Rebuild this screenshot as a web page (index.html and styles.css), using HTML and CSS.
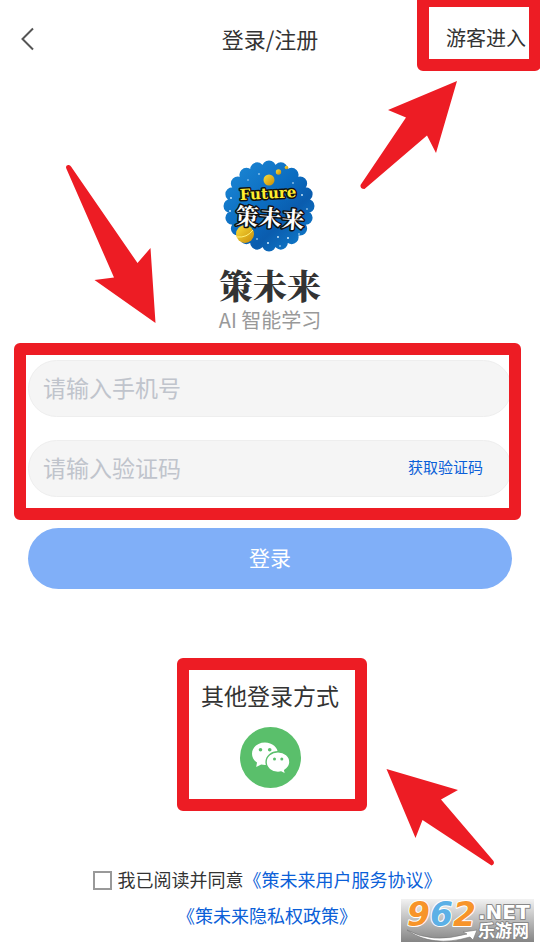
FILE: index.html
```html
<!DOCTYPE html>
<html lang="zh-CN">
<head>
<meta charset="utf-8">
<meta name="viewport" content="width=device-width, initial-scale=1">
<title>登录/注册</title>
<link rel="stylesheet" href="styles.css">
</head>
<body>

<header class="header">
	<button class="back" type="button" aria-label="返回">
		<svg width="16" height="26" viewBox="0 0 16 26"><path d="M13 2.500 2.500 13 13 23.500"/></svg>
	</button>
	<h1 class="header-title">登录/注册</h1>
	<div class="guest">
		<a class="guest-link" href="#">游客进入</a>
		<span class="frame frame-guest"></span>
		<svg class="arrow arrow-guest" width="98" height="111" viewBox="0 0 98 111">
			<path d="M97 1 28 30 46 37.500 0.500 105Q0 109 4.500 109L67 55.500 76 73Z"/>
		</svg>
	</div>
</header>

<main class="main">
	<section class="brand">
		<svg class="logo" width="92" height="92" viewBox="0 0 92 92">
			<defs>
				<linearGradient id="sea" gradientUnits="userSpaceOnUse" x1="10" y1="10" x2="80" y2="84">
					<stop offset="0" stop-color="#1a84d2"/>
					<stop offset="0.450" stop-color="#0b6cc0"/>
					<stop offset="0.700" stop-color="#0a5cae"/>
					<stop offset="1" stop-color="#0f78c8"/>
				</linearGradient>
				<linearGradient id="gold" x1="0" y1="0" x2="1" y2="1">
					<stop offset="0" stop-color="#fbe03a"/>
					<stop offset="1" stop-color="#c88a08"/>
				</linearGradient>
			</defs>
			<circle class="logo-edge" cx="46" cy="46" r="38.500" pathLength="20" stroke="url(#sea)"/>
			<circle cx="46" cy="46" r="41" fill="url(#sea)"/>
			<!-- 星星 -->
			<g fill="#d8f2ff">
				<circle cx="36" cy="14" r="0.800"/><circle cx="25" cy="20" r="0.700"/>
				<circle cx="70" cy="23" r="0.800"/><circle cx="8" cy="38" r="0.900"/>
				<circle cx="79" cy="35" r="0.900"/><circle cx="84" cy="49" r="0.800"/>
				<circle cx="7" cy="51" r="0.900"/><circle cx="45" cy="83" r="1"/>
				<circle cx="55" cy="77" r="0.900"/><circle cx="65" cy="78" r="1"/>
				<circle cx="34" cy="79" r="0.800"/><circle cx="76" cy="74" r="0.800"/>
				<circle cx="57" cy="86" r="0.800"/>
			</g>
			<circle cx="46" cy="20" r="5.500" fill="url(#gold)"/>
			<circle cx="55.500" cy="12" r="2.700" fill="url(#gold)"/>
			<circle cx="63.500" cy="7.500" r="1.800" fill="url(#gold)"/>
			<circle cx="22" cy="74" r="9" fill="url(#gold)"/>
			<path d="M14 77Q24 78 30 70" fill="none" stroke="#fff27a"/>
			<text class="logo-en" x="17" y="40" transform="rotate(-3 17 40)">Future</text>
			<text class="logo-cn" x="12" y="64" transform="rotate(4 12 64)">策未来</text>
		</svg>
		<h2 class="brand-name">策未来</h2>
		<p class="brand-slogan">AI 智能学习</p>
	</section>

	<form class="form">
		<div class="fields">
			<div class="field">
				<input class="field-input" type="tel" placeholder="请输入手机号" aria-label="手机号">
			</div>
			<div class="field">
				<input class="field-input" type="text" placeholder="请输入验证码" aria-label="验证码">
				<button class="get-code" type="button">获取验证码</button>
			</div>
			<span class="frame frame-fields"></span>
			<svg class="arrow arrow-fields" width="92" height="160" viewBox="0 0 92 160">
				<path d="M1.500 5Q0 1.500 3 1Q5 0.500 6 2.500L72.500 99 85.500 84 90.500 159 29.500 116 49 113.500Z"/>
			</svg>
		</div>
		<button class="submit" type="button">登录</button>
	</form>

	<section class="others">
		<h3 class="others-title">其他登录方式</h3>
		<button class="wechat" type="button" aria-label="微信登录">
			<svg width="61" height="61" viewBox="0 0 61 61">
				<circle cx="30.500" cy="30.500" r="30.500" fill="#5abf6b"/>
				<path fill="#fff" d="M25 15.500c-7.400 0-13 4.900-13 11.200 0 3.600 1.900 6.700 5 8.800L16.200 40l5-2.600c1.200.300 2.500.500 3.800.500 7.300 0 13-5 13-11.200s-5.700-11.200-13-11.200z"/>
				<path fill="#fff" stroke="#5abf6b" stroke-width="1.400" d="M38 24.800c-6.700 0-11.900 4.500-11.900 10.300S31.300 45.400 38 45.400c1.100 0 2.200-.100 3.200-.400l4.500 2.300-1-4c3.100-1.800 5.200-4.800 5.200-8.200 0-5.800-5.200-10.300-11.900-10.300z"/>
				<g fill="#5abf6b">
					<circle cx="20.500" cy="22.800" r="1.800"/><circle cx="29.700" cy="22.800" r="1.800"/>
					<circle cx="34.500" cy="32" r="1.500"/><circle cx="41.800" cy="32" r="1.500"/>
				</g>
			</svg>
		</button>
		<span class="frame frame-others"></span>
		<svg class="arrow arrow-others" width="110" height="99" viewBox="0 0 110 99">
			<path d="M0.500 1 72 22 55 31.500 107.500 93Q109 96 105.500 97.500L36.500 52 29.500 70Z"/>
		</svg>
	</section>

	<div class="agree">
		<div class="agree-row">
			<label class="agree-label"><input class="agree-check" type="checkbox">我已阅读并同意</label><a href="#">《策未来用户服务协议》</a>
		</div>
		<a href="#">《策未来隐私权政策》</a>
	</div>
</main>

<svg class="watermark" width="133" height="43" viewBox="0 0 133 43">
	<defs>
		<linearGradient id="steel" x1="0" y1="0" x2="0" y2="1">
			<stop offset="0" stop-color="#f2f2f2"/>
			<stop offset="1" stop-color="#858585"/>
		</linearGradient>
	</defs>
	<rect width="133" height="43" fill="url(#steel)"/>
	<text class="mark-num" x="6" y="27"><tspan fill="#f7942a">9</tspan><tspan fill="#5cb0e6">6</tspan><tspan fill="#f7942a">2</tspan></text>
	<path d="M6 31Q31 45 66 35L62 33 76 31 72 41 69 38Q31 49 6 31Z" fill="#fff" stroke="#777" stroke-width="0.600"/>
	<text class="mark-net" x="77" y="20">.NET</text>
	<text class="mark-cn" x="77" y="38">乐游网</text>
</svg>

</body>
</html>
```
FILE: styles.css
```css
*{box-sizing: border-box;}

body{
	position: relative;
	min-height: 100vh;
	margin: 0px;
	background: #fff;color: #333;
	font-family: "Noto Sans CJK SC",sans-serif;
	overflow-x: hidden;
}

h1,h2,h3,p{margin: 0px;font-weight: normal;}

button{
	padding: 0px;
	border: none;background: none;
	font-family: inherit;
	cursor: pointer;
}

svg{display: block;}

a{color: #0b5fd8;text-decoration: none;}

/* 顶部 */
.header{
	display: grid;grid-template-columns: 1fr auto 1fr;align-items: center;
	height: 76px;
	padding: 0px 14px 0px 20px;
}
.back{justify-self: start;padding-top: 2px;}
.back path{fill: none;stroke: #555;stroke-width: 2;}
.header-title{margin-right: 6px;font-size: 22px;line-height: 30px;}
.guest{position: relative;justify-self: end;}
.guest-link{display: block;color: #333;font-size: 20px;line-height: 30px;}

/* 红色标注 */
.frame{
	position: absolute;
	border: 12px solid #ed1c24;border-radius: 6px;
	pointer-events: none;
}
.frame-guest{top: -28px;right: -15px;bottom: -18px;left: -29px;}
.frame-fields{top: -17px;right: -9px;bottom: -23px;left: -14px;}
.frame-others{top: -22px;right: -28px;bottom: -23px;left: -24px;}
.arrow{position: absolute;fill: #ed1c24;pointer-events: none;}
.arrow-guest{top: 57px;right: 68px;}
.arrow-fields{top: -196px;left: 37px;}
.arrow-others{top: 88px;left: 185px;}

/* logo */
.brand{
	display: flex;flex-direction: column;align-items: center;
	padding-top: 84px;
}
.logo{margin-right: 3px;}
.logo-edge{fill: none;stroke-width: 14;stroke-linecap: round;stroke-dasharray: 0 1;}
.logo-en,.logo-cn{stroke: #111;stroke-width: 3;stroke-linejoin: round;paint-order: stroke;font-weight: bold;}
.logo-en{fill: #ffee2e;font-family: "DejaVu Serif",serif;font-size: 15px;}
.logo-cn{fill: #fff;font-family: "Noto Serif CJK SC","Noto Sans CJK SC",serif;font-size: 23px;}
.brand-name{
	margin-top: 11px;
	font-family: "Noto Serif CJK SC","Noto Sans CJK SC",serif;font-size: 34px;font-weight: 900;line-height: 44px;
}
.brand-slogan{color: #999;font-size: 20px;line-height: 26px;}

/* 表单 */
.form{padding: 27px 28px 0px;}
.fields{position: relative;display: grid;gap: 23px;}
.field{
	display: flex;align-items: center;
	height: 57px;
	padding: 0px 28px 4px 14px;
	border: 1px solid #eee;border-radius: 29px;background: #f5f5f5;
}
.field-input{
	flex: 1;min-width: 0px;
	padding: 0px;
	border: none;background: none;outline: none;
	color: #333;font-family: inherit;font-size: 23px;line-height: 34px;
}
.field-input::placeholder{color: #c0c4cc;}
.get-code{color: #0b5fd8;font-size: 15px;}
.submit{
	display: block;
	width: 100%;height: 61px;
	margin-top: 31px;padding-bottom: 4px;
	border-radius: 31px;background: #80aff8;
	color: #fff;font-size: 21px;
}

/* 其他登录方式 */
.others{
	position: relative;
	display: grid;justify-items: center;gap: 17px;
	width: fit-content;
	margin: 91px auto 0px;
}
.others-title{font-size: 23px;line-height: 30px;}

/* 协议 */
.agree{
	padding: 73px 6px 14px 0px;
	font-size: 18px;line-height: 36px;text-align: center;
}
.agree-check{
	appearance: none;
	width: 19px;height: 19px;
	margin: 0px 6px 0px 0px;
	border: 2px solid #999;background: #fff;
	vertical-align: -3px;
}
.agree-check:checked{background: #0b5fd8;}

/* 水印 */
.watermark{position: absolute;right: 6px;bottom: 6px;}
.mark-num,.mark-net,.mark-cn{stroke: #fff;stroke-width: 2;stroke-linejoin: round;paint-order: stroke;font-weight: bold;}
.mark-num{font-family: "DejaVu Sans",sans-serif;font-size: 33px;font-style: italic;}
.mark-net,.mark-cn{fill: #fff;stroke: #888;}
.mark-net{font-family: "DejaVu Sans",sans-serif;font-size: 20px;}
.mark-cn{font-size: 17px;}
```
